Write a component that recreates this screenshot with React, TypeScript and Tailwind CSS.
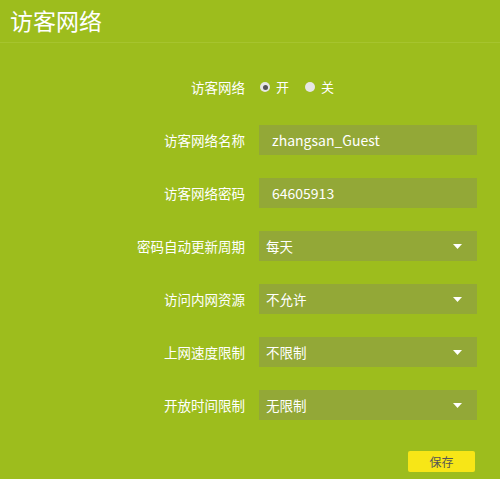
import { useState } from "react";

type SelectRow = {
  label: string;
  value: string;
};

const selects: SelectRow[] = [
  { label: "密码自动更新周期", value: "每天" },
  { label: "访问内网资源", value: "不允许" },
  { label: "上网速度限制", value: "不限制" },
  { label: "开放时间限制", value: "无限制" }
];

const font = "font-['Microsoft_YaHei','Noto_Sans_CJK_SC',sans-serif]";

function Label({ children }: { children: string }) {
  return (
    <div className="w-[245px] shrink-0 text-right text-[13.5px] text-white">
      {children}
    </div>
  );
}

function Radio({ checked, label, onClick }: { checked: boolean; label: string; onClick: () => void }) {
  return (
    <button className="flex items-center gap-[6px] text-[13px] text-white" onClick={onClick} type="button">
      <span className="flex size-[10px] items-center justify-center rounded-full bg-[#e6e6e6]">
        {checked ? <span className="size-[5px] rounded-full bg-[#555]" /> : null}
      </span>
      {label}
    </button>
  );
}

export default function App() {
  const [enabled, setEnabled] = useState(true);

  return (
    <div className={`h-[479px] w-[500px] bg-[#9dbd1d] ${font}`}>
      <header className="h-[43px] border-b border-[#a6c42e] pl-[10px] pt-[4px] text-[23px] leading-[32px] text-white">
        访客网络
      </header>

      <div className="pt-[34px]">
        <div className="flex h-[20px] items-center gap-[15px]">
          <Label>访客网络</Label>
          <div className="flex items-center gap-[16px]">
            <Radio checked={enabled} label="开" onClick={() => setEnabled(true)} />
            <Radio checked={!enabled} label="关" onClick={() => setEnabled(false)} />
          </div>
        </div>

        <div className="mt-[28px] flex flex-col gap-[23px]">
          <div className="flex items-center gap-[14px]">
            <Label>访客网络名称</Label>
            <div className="flex h-[30px] w-[218px] items-center bg-[#93a837] pl-[13px] text-[14px] text-white">
              zhangsan_Guest
            </div>
          </div>
          <div className="flex items-center gap-[14px]">
            <Label>访客网络密码</Label>
            <div className="flex h-[30px] w-[218px] items-center bg-[#93a837] pl-[13px] text-[14px] text-white">
              64605913
            </div>
          </div>
          {selects.map((row) => (
            <div className="flex items-center gap-[14px]" key={row.label}>
              <Label>{row.label}</Label>
              <div className="flex h-[30px] w-[218px] items-center justify-between bg-[#93a837] pl-[7px] pr-[15px] text-[13.5px] text-white">
                <span>{row.value}</span>
                <svg className="h-[5px] w-[9px]" viewBox="0 0 9 5">
                  <path d="M0 0h9L4.5 5z" fill="#fff" />
                </svg>
              </div>
            </div>
          ))}
        </div>

        <div className="mt-[31px] flex justify-end pr-[25px]">
          <button
            className="h-[21px] w-[67px] rounded-[2px] bg-[#f7e617] text-[12px] text-[#555]"
            type="button"
          >
            保存
          </button>
        </div>
      </div>
    </div>
  );
}
